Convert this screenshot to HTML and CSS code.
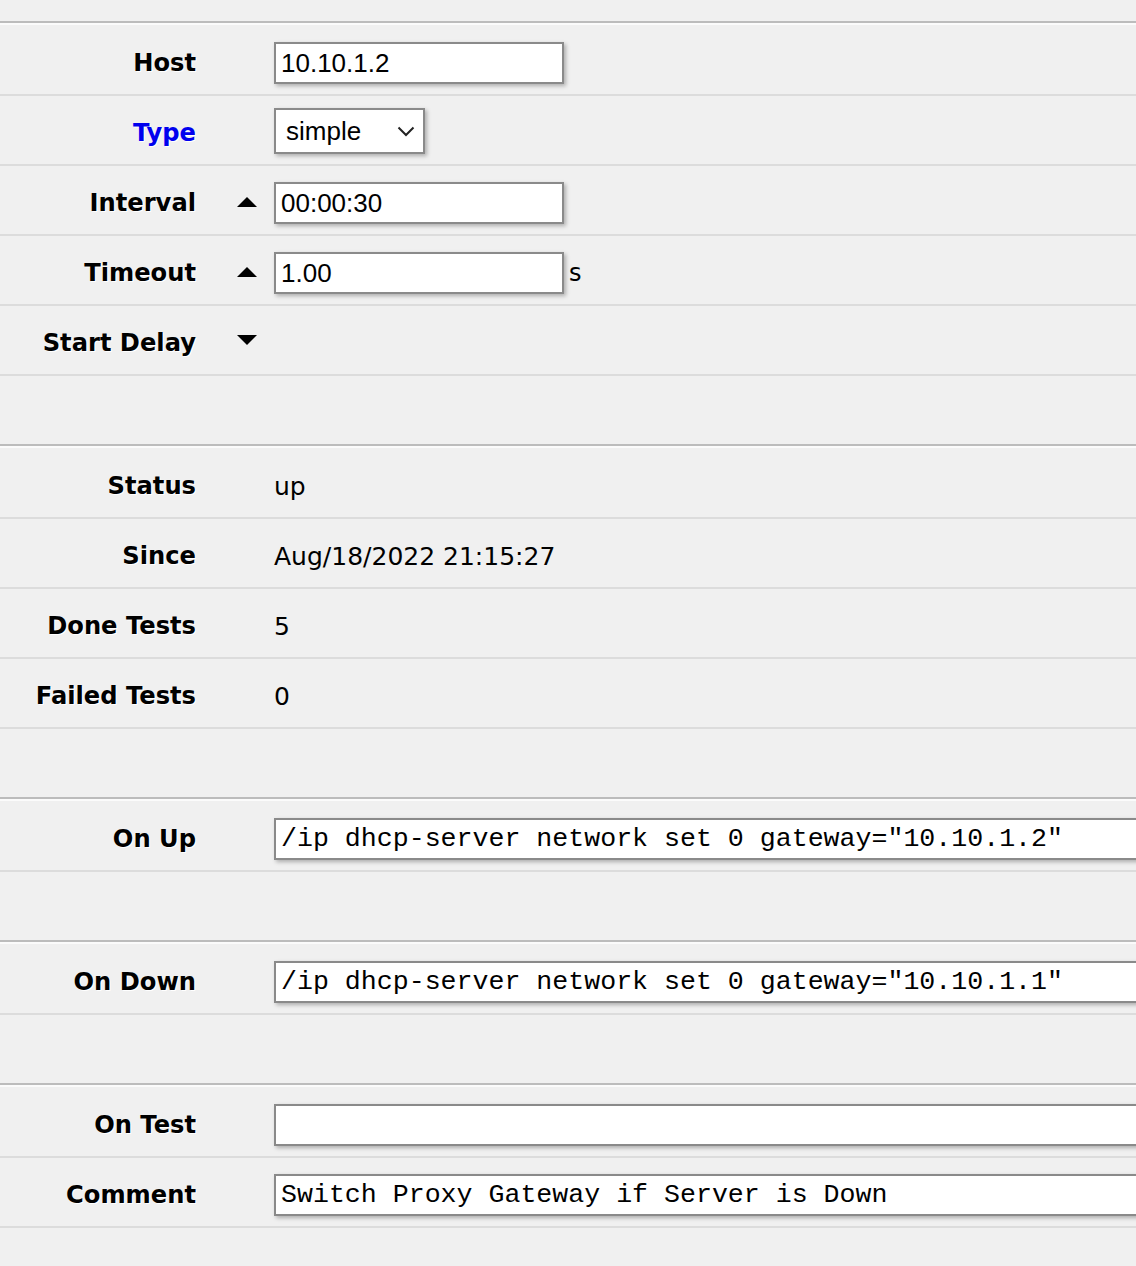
FILE: index.html
```html
<!DOCTYPE html>
<html>
<head>
<meta charset="utf-8">
<link rel="stylesheet" href="styles.css">
</head>
<body>
<div class="page">
  <section class="group">
    <div class="row">
      <div class="label">Host</div>
      <div class="arrow"></div>
      <div class="value"><input class="field short" type="text" value="10.10.1.2"></div>
    </div>
    <div class="row">
      <div class="label link">Type</div>
      <div class="arrow"></div>
      <div class="value">
        <div class="select">
          <span>simple</span>
          <svg class="chev" width="18" height="11" viewBox="0 0 18 11"><path d="M1.5 1.5 L9 9 L16.5 1.5" fill="none" stroke="#222" stroke-width="2"/></svg>
        </div>
      </div>
    </div>
    <div class="row">
      <div class="label">Interval</div>
      <div class="arrow"><span class="tri up"></span></div>
      <div class="value"><input class="field short" type="text" value="00:00:30"></div>
    </div>
    <div class="row">
      <div class="label">Timeout</div>
      <div class="arrow"><span class="tri up"></span></div>
      <div class="value"><input class="field short" type="text" value="1.00"><span class="unit">s</span></div>
    </div>
    <div class="row">
      <div class="label">Start Delay</div>
      <div class="arrow"><span class="tri down"></span></div>
      <div class="value"></div>
    </div>
    <div class="blank"></div>
  </section>

  <section class="group">
    <div class="row">
      <div class="label">Status</div>
      <div class="arrow"></div>
      <div class="value text">up</div>
    </div>
    <div class="row">
      <div class="label">Since</div>
      <div class="arrow"></div>
      <div class="value text">Aug/18/2022 21:15:27</div>
    </div>
    <div class="row">
      <div class="label">Done Tests</div>
      <div class="arrow"></div>
      <div class="value text">5</div>
    </div>
    <div class="row">
      <div class="label">Failed Tests</div>
      <div class="arrow"></div>
      <div class="value text">0</div>
    </div>
    <div class="blank"></div>
  </section>

  <section class="group">
    <div class="row">
      <div class="label">On Up</div>
      <div class="arrow"></div>
      <div class="value"><input class="field long mono" type="text" value="/ip dhcp-server network set 0 gateway=&quot;10.10.1.2&quot;"></div>
    </div>
    <div class="blank"></div>
  </section>

  <section class="group">
    <div class="row">
      <div class="label">On Down</div>
      <div class="arrow"></div>
      <div class="value"><input class="field long mono" type="text" value="/ip dhcp-server network set 0 gateway=&quot;10.10.1.1&quot;"></div>
    </div>
    <div class="blank"></div>
  </section>

  <section class="group">
    <div class="row">
      <div class="label">On Test</div>
      <div class="arrow"></div>
      <div class="value"><input class="field long mono" type="text" value=""></div>
    </div>
    <div class="row">
      <div class="label">Comment</div>
      <div class="arrow"></div>
      <div class="value"><input class="field long mono" type="text" value="Switch Proxy Gateway if Server is Down"></div>
    </div>
  </section>
</div>
</body>
</html>
```

FILE: styles.css
```css
html, body {
  margin: 0;
  padding: 0;
  background: #f0f0f0;
  overflow: hidden;
}

.page {
  padding-top: 21px;
  width: 1136px;
  overflow: hidden;
  font-family: "DejaVu Sans", Verdana, sans-serif;
  color: #000;
}

.group {
  border-top: 2px solid #bcbcbc;
}

.group::before {
  content: "";
  display: block;
  height: 3px;
  background: linear-gradient(#fbfbfb 0, #fbfbfb 2px, #f0f0f0 2px);
}

.row {
  box-sizing: border-box;
  height: 70px;
  border-bottom: 2px solid #dcdcdc;
  display: flex;
  align-items: center;
  padding-top: 6px;
}

.blank {
  height: 68px;
}

.label {
  width: 196px;
  flex: none;
  text-align: right;
  font-weight: bold;
  font-size: 24.2px;
  text-shadow: 1px 1px 0 #fff;
  white-space: nowrap;
}

.label.link {
  color: #0000ee;
}

.arrow {
  width: 78px;
  flex: none;
  display: flex;
  align-items: center;
  padding-left: 41px;
  box-sizing: border-box;
}

.tri {
  display: block;
  width: 0;
  height: 0;
  border-left: 10px solid transparent;
  border-right: 10px solid transparent;
}

.tri.up {
  border-bottom: 10px solid #000;
  margin-top: -3px;
}

.tri.down {
  border-top: 10px solid #000;
  margin-top: -6px;
}

.value {
  flex: none;
  display: flex;
  align-items: center;
  white-space: nowrap;
}

.value.text {
  font-size: 25px;
}

.field {
  box-sizing: border-box;
  height: 42px;
  margin: 0;
  border: 2px solid #8a8a8a;
  background: #fff;
  box-shadow: 2px 2px 4px rgba(0, 0, 0, 0.28);
  padding: 0 5px;
  font-family: "Liberation Sans", Arial, sans-serif;
  font-size: 26px;
  color: #000;
  outline: none;
}

.field.short {
  width: 290px;
}

.field.long {
  width: 1000px;
}

.field.mono {
  font-family: "Liberation Mono", "Courier New", monospace;
  font-size: 26.6px;
}

.unit {
  margin-left: 5px;
  font-size: 24px;
}

.select {
  box-sizing: border-box;
  width: 151px;
  height: 46px;
  margin-top: -4px;
  border: 2px solid #8a8a8a;
  background: #fff;
  box-shadow: 2px 2px 4px rgba(0, 0, 0, 0.28);
  display: flex;
  align-items: center;
  justify-content: space-between;
  padding: 0 8px 0 10px;
  font-family: "Liberation Sans", Arial, sans-serif;
  font-size: 26px;
}

.chev {
  display: block;
}
```
